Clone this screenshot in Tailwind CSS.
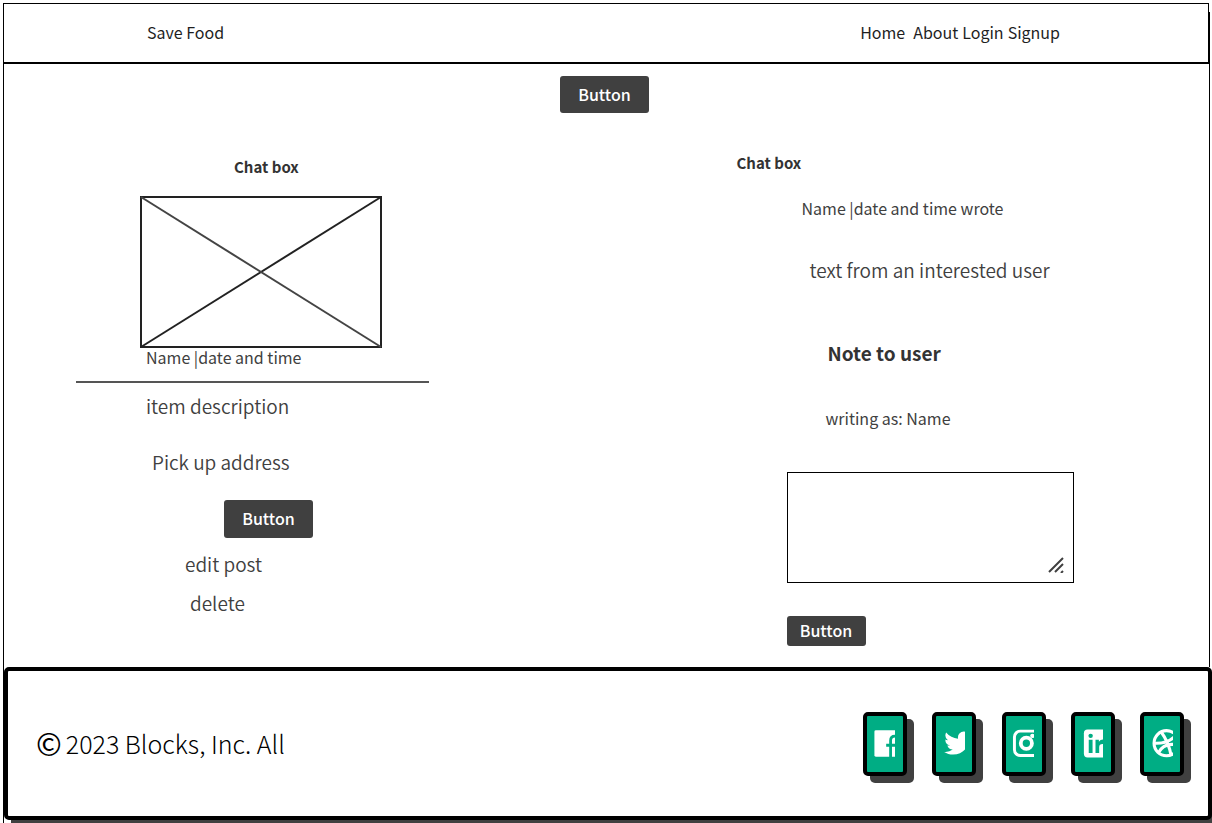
<!DOCTYPE html>
<html lang="en">
<head>
<meta charset="utf-8">
<meta name="viewport" content="width=device-width, initial-scale=1">
<title>Save Food</title>
<script src="https://cdn.jsdelivr.net/npm/@tailwindcss/browser@4"></script>
</head>
<body class="min-h-screen overflow-x-hidden bg-white font-['Noto_Sans_CJK_SC',sans-serif] text-[#404040]">
<div class="mt-[3px] mr-[2px] ml-[3px] flex min-h-[820px] flex-col border-l border-black">
  <header class="mr-px -ml-px flex h-[61px] items-center justify-between border border-b-2 border-black bg-white pr-[148px] pb-[2px] pl-[143px] text-base text-[#1f1f1f] shadow-[1px_9px_0_#000]">
    <a href="#">Save Food</a>
    <nav class="flex gap-1">
      <a href="#" class="mr-1">Home</a>
      <a href="#">About</a>
      <a href="#">Login</a>
      <a href="#">Signup</a>
    </nav>
  </header>

  <main class="border-r border-black bg-white pb-[21px]">
    <div class="flex justify-center pt-3 pr-1">
      <button type="button" class="h-[37px] w-[89px] rounded-[3px] bg-[#404040] pb-[2px] text-base font-medium text-white">Button</button>
    </div>
    <div class="grid grid-cols-2">
      <section class="flex flex-col items-start pt-11">
        <h2 class="ml-[230px] text-[15px] leading-5 font-bold text-[#333]">Chat box</h2>
        <svg class="mt-[19px] ml-[136px] h-[152px] w-[242px]" viewBox="0 0 242 152" fill="none" stroke="#222" stroke-width="2" role="img" aria-label="Item picture">
          <path d="M1 1h240v150H1z"/><path d="M1 151 241 1"/><path d="m1 1 240 150" stroke="#444"/>
        </svg>
        <p class="ml-[142px] text-base leading-[18px]">Name |date and time</p>
        <hr class="mt-[15px] ml-[72px] h-[2px] w-[353px] border-0 bg-[#555]">
        <p class="mt-[11px] ml-[142px] text-[19px] leading-6 font-[350]">item description</p>
        <p class="mt-8 ml-[148px] text-[19px] leading-6 font-[350]">Pick up address</p>
        <button type="button" class="mt-[26px] ml-[220px] h-[38px] w-[89px] rounded-[3px] bg-[#404040] pb-[2px] text-base font-medium text-white">Button</button>
        <a href="#" class="mt-[14px] ml-[181px] text-[19px] leading-6 font-[350]">edit post</a>
        <a href="#" class="mt-[15px] ml-[186px] text-[19px] leading-6 font-[350]">delete</a>
      </section>

      <section class="flex flex-col items-start pt-10">
        <h2 class="ml-[130px] text-[15px] leading-5 font-bold text-[#333]">Chat box</h2>
        <p class="mt-[27px] ml-[195px] text-base leading-4">Name |date and time wrote</p>
        <p class="mt-[42px] ml-[203px] text-[19px] leading-6 font-[350]">text from an interested user</p>
        <label for="note" class="mt-[59px] ml-[221px] text-[19px] leading-6 font-bold text-[#333]">Note to user</label>
        <p class="mt-[45px] ml-[219px] text-base leading-4">writing as: Name</p>
        <div class="relative mt-[46px] ml-[180px] flex">
          <textarea id="note" class="h-[111px] w-[287px] resize-none border border-black bg-white p-2 text-base outline-none"></textarea>
          <svg class="pointer-events-none absolute right-[10px] bottom-[10px] size-4" viewBox="0 0 16 16" stroke="#404040" stroke-width="2" fill="none" aria-hidden="true">
            <path d="M1 15 15 1M7 15l8-8M13 16l2-2"/>
          </svg>
        </div>
        <button type="button" class="mt-[33px] ml-[180px] h-[30px] w-[79px] rounded-[3px] bg-[#404040] pb-[2px] text-base font-medium text-white">Button</button>
      </section>
    </div>
  </main>

  <footer class="-mr-[2px] flex h-[153px] items-center justify-between rounded-[5px] border-4 border-black bg-white pr-6 pl-7 shadow-[7px_7px_0_#404040]">
    <p class="flex items-center gap-1 pb-[2px] text-[25px] leading-8 font-light text-black"><span class="text-[31px] font-normal">©</span> 2023 Blocks, Inc. All</p>
    <nav class="flex w-[321px] justify-between text-white" aria-label="Social links">
      <a href="#" aria-label="Facebook" class="flex h-16 w-11 items-center rounded-[5px] border-4 border-black bg-[#00ad84] pl-[3px] shadow-[7px_7px_0_#404040]">
        <svg class="h-[35px] w-[25px]" viewBox="0 0 17 24" preserveAspectRatio="xMinYMid slice" fill="none"><rect x="3" y="3" width="18" height="18" rx="1" fill="currentColor"/><path d="M14 21.500V10q0-3 3-3h1M11 13.200h7" stroke="#00ad84" stroke-width="1.900"/></svg>
      </a>
      <a href="#" aria-label="Twitter" class="flex h-16 w-11 items-center rounded-[5px] border-4 border-black bg-[#00ad84] pl-[3px] shadow-[7px_7px_0_#404040]">
        <svg class="h-[35px] w-[26px]" viewBox="0 0 17 24" preserveAspectRatio="xMinYMid slice" fill="currentColor"><path transform="translate(1.500 .4) scale(.94)" d="M19.633 7.997c.013.175.013.349.013.523 0 5.325-4.053 11.461-11.460 11.461-2.282 0-4.402-.661-6.186-1.809.324.037.636.050.973.050a8.070 8.070 0 0 0 5.001-1.721 4.036 4.036 0 0 1-3.767-2.793c.249.037.499.062.761.062.361 0 .724-.050 1.061-.137a4.027 4.027 0 0 1-3.230-3.953v-.050c.537.299 1.160.486 1.820.511a4.022 4.022 0 0 1-1.796-3.354c0-.748.199-1.434.548-2.032a11.457 11.457 0 0 0 8.306 4.215c-.062-.300-.100-.612-.100-.923a4.026 4.026 0 0 1 4.028-4.028c1.160 0 2.207.486 2.943 1.272a7.957 7.957 0 0 0 2.556-.973 4.020 4.020 0 0 1-1.771 2.220 8.073 8.073 0 0 0 2.319-.624 8.645 8.645 0 0 1-2.019 2.083z"/></svg>
      </a>
      <a href="#" aria-label="Instagram" class="flex h-16 w-11 items-center rounded-[5px] border-4 border-black bg-[#00ad84] pl-[3px] shadow-[7px_7px_0_#404040]">
        <svg class="h-[35px] w-[25px]" viewBox="0 0 17 24" preserveAspectRatio="xMinYMid slice" fill="none" stroke="currentColor" stroke-width="2"><rect x="3.700" y="3.600" width="17" height="16.600" rx="4"/><circle cx="11.800" cy="11.800" r="3.800" stroke-width="2.600"/><circle cx="15.900" cy="6.800" r="1.500" fill="currentColor" stroke="none"/></svg>
      </a>
      <a href="#" aria-label="LinkedIn" class="flex h-16 w-11 items-center rounded-[5px] border-4 border-black bg-[#00ad84] pl-[3px] shadow-[7px_7px_0_#404040]">
        <svg class="h-[35px] w-[25px]" viewBox="0 0 17 24" preserveAspectRatio="xMinYMid slice" fill="#00ad84"><rect x="4" y="2.500" width="18" height="19" rx="2.500" fill="currentColor"/><circle cx="8.600" cy="6.800" r="1.500"/><path d="M7.300 9.500h2.600v9H7.300zM11.900 9.500h2.300v1.300q1-1.500 3-1.500h1v3h-1.500q-2.300 0-2.300 2.200v4h-2.500z"/></svg>
      </a>
      <a href="#" aria-label="Dribbble" class="flex h-16 w-11 items-center rounded-[5px] border-4 border-black bg-[#00ad84] pl-[3px] shadow-[7px_7px_0_#404040]">
        <svg class="h-[35px] w-[26px]" viewBox="0 0 17 24" preserveAspectRatio="xMinYMid slice" fill="none" stroke="currentColor" stroke-width="2"><circle cx="12.800" cy="11.800" r="8.200"/><path d="M4.500 11.800c5 .3 10-.9 13.500-4.300M9.300 4.500c3.300 4.500 5.300 9 6.500 15.500M7.300 18.300c2.200-4.300 6-6.300 11-5.600"/></svg>
      </a>
    </nav>
  </footer>
</div>
</body>
</html>
